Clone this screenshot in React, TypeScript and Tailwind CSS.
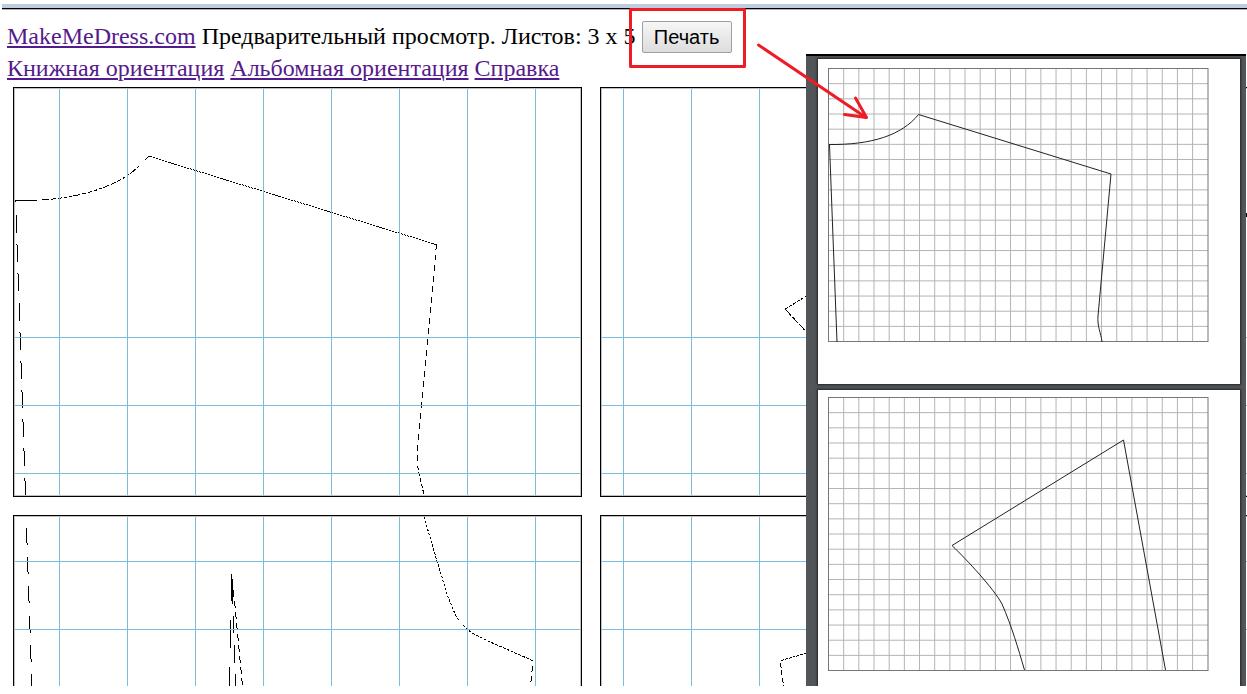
import React from "react";

const V = [46, 114, 182, 250, 318, 386, 454, 522];

type SheetProps = { label: string; vertical: number[]; horizontal: number[]; children?: React.ReactNode };

function Sheet({ label, vertical, horizontal, children }: SheetProps) {
  return (
    <svg role="img" aria-label={label} width="569" height="410" viewBox="0 0 569 410" fill="none" shapeRendering="crispEdges" className="block shrink-0">
      <rect x="1.5" y="1.5" width="566" height="407" stroke="#c0c0c0" />
      <rect x="0.5" y="0.5" width="568" height="409" stroke="#000" />
      <g stroke="#000">{children}</g>
      <g stroke="#7bbdd8">
        {vertical.map((x) => (
          <path key={x} d={`M${x + 0.5} 2V408`} />
        ))}
        {horizontal.map((y) => (
          <path key={y} d={`M2 ${y + 0.5}H567`} />
        ))}
      </g>
    </svg>
  );
}

function PrintedPage({ label, children }: { label: string; children: React.ReactNode }) {
  const cols = Array.from({ length: 24 }, (_, i) => 0.5 + (i + 1) * 15.17);
  const rows = Array.from({ length: 17 }, (_, i) => 0.5 + (i + 1) * 15.17);
  return (
    <div className="h-[325px] bg-white px-[10px] pt-[9px] shadow-[0_0_2px_1px_#222628] last:pt-[7px]">
      <svg role="img" aria-label={label} width="381" height="275" viewBox="0 0 381 275" fill="none" className="block">
        <g stroke="#b4b4b4">
          {cols.map((x) => (
            <path key={x} d={`M${x} 1V274`} />
          ))}
          {rows.map((y) => (
            <path key={y} d={`M1 ${y}H380`} />
          ))}
        </g>
        <rect x="0.5" y="0.5" width="379.5" height="273" stroke="#777" />
        <g stroke="#222">{children}</g>
      </svg>
    </div>
  );
}

export default function App() {
  const link = "text-[#551a8b] underline decoration-2 underline-offset-2";
  return (
    <div className="relative h-[686px] overflow-hidden bg-white pl-[2px] pt-1 font-['Liberation_Serif',serif] text-black">
      <div className="h-[6px] border-b border-[#b0b0b0] bg-[#bfcbdf]">
        <div className="h-[5px] border-b border-black" />
      </div>
      <header className="whitespace-nowrap pl-[5px] pt-[10px] text-[24px] leading-8">
        <div className="flex h-8 items-baseline gap-[6px]">
          <a href="#home" className={link}>MakeMeDress.com</a>
          <span>Предварительный просмотр. Листов: 3 x 5</span>
          <button type="button" className="h-8 w-[90px] rounded-xs border border-[#a0a0a0] bg-linear-to-b from-[#f6f6f6] to-[#dddddd] font-['Liberation_Sans',sans-serif] text-[20px] leading-7">
            Печать
          </button>
        </div>
        <nav className="flex h-8 items-center gap-[6px]">
          <a href="#portrait" className={link}>Книжная ориентация</a>
          <a href="#landscape" className={link}>Альбомная ориентация</a>
          <a href="#help" className={link}>Справка</a>
        </nav>
      </header>
      <main className="grid grid-cols-[repeat(3,569px)] gap-[18px] pl-[11px] pt-[3px]">
        <Sheet label="1-1" vertical={V} horizontal={[250, 318, 386]}>
          <path d="M2 115V113.5H24" />
          <path d="M29 113C70 110 106 99 126 79" strokeDasharray="7 2 5 2 4 2 3 2 3 1" />
          <path d="M132 73L135.500 69.500H137" />
          <path d="M137 69.500L423 157.500" strokeDasharray="2.200 1" />
          <path d="M3 128L12.500 408" strokeDasharray="18 11.200" />
          <path d="M423.500 157L404.500 363V378" strokeDasharray="6 4.600" />
          <path d="M404.500 379L411 408" strokeDasharray="4 2.200" />
        </Sheet>
        <Sheet label="1-2" vertical={[23, 91, 159, 227, 295, 363, 431, 499]} horizontal={[250, 318, 386]}>
          <path d="M185.500 222L240 188" strokeDasharray="3 1.500" />
          <path d="M185.500 222.500L240 281" strokeDasharray="8 2" />
        </Sheet>
        <Sheet label="1-3" vertical={[]} horizontal={[250, 318, 386]}>
          <path d="M57 127.500H61" strokeWidth="4" />
        </Sheet>
        <Sheet label="2-1" vertical={V} horizontal={[46, 114, 182, 250, 318, 386]}>
          <path d="M13.500 13L19.500 187" strokeDasharray="17 12.200" />
          <path d="M411 2L424 46L435 82L442 99L446 106" strokeDasharray="2.500 1.600" />
          <path d="M450 110L455 115Q462 120 475 126L520.500 146" strokeDasharray="3 1.200" />
          <path d="M519.500 151L517.500 171" strokeDasharray="6 4" />
          <path d="M218.500 59V86M219.500 64V89M220.500 75V82M217.500 105V133M216.500 152V171M220.500 101V118M221.500 130V148M222.500 159V171" />
          <path d="M221.500 86L229.500 171" strokeDasharray="7 4" />
        </Sheet>
        <Sheet label="2-2" vertical={[23, 91, 159, 227, 295, 363, 431, 499]} horizontal={[46, 114, 182, 250, 318, 386]}>
          <path d="M181 145.500L240 128.500" strokeDasharray="3 1" />
          <path d="M180.500 148L183.500 171" strokeDasharray="5 2.500" />
        </Sheet>
        <Sheet label="2-3" vertical={[]} horizontal={[46, 114, 182]} />
      </main>

      <aside className="absolute right-px top-[54px] h-[632px] w-[440px] overflow-hidden border-t-2 border-black bg-[#525659] pl-3 pr-[6px] pt-[3px]">
        <div className="flex flex-col gap-[6px]">
          <PrintedPage label="1">
            <path d="M1 76.500C44 77 74 67 90.500 46.500L283 106L270 248C269 258 273 265 274 274" />
            <path d="M1.500 77L9 274" />
          </PrintedPage>
          <PrintedPage label="2">
            <path d="M196.500 273C190 251 184 230 174 207C166 192 140 164 124 148.500L295.500 43L337.500 273" />
          </PrintedPage>
        </div>
      </aside>

      <svg aria-hidden="true" width="260" height="130" viewBox="620 0 260 130" fill="none" stroke="#ee1c25" strokeWidth="3" strokeLinecap="round" strokeLinejoin="round" className="pointer-events-none absolute left-[620px] top-0">
        <rect x="630.5" y="9.5" width="114" height="57" />
        <path d="M758.500 45L866 117.500" />
        <path d="M855.500 98L866.500 117.500L844.500 114.500" />
      </svg>
    </div>
  );
}
